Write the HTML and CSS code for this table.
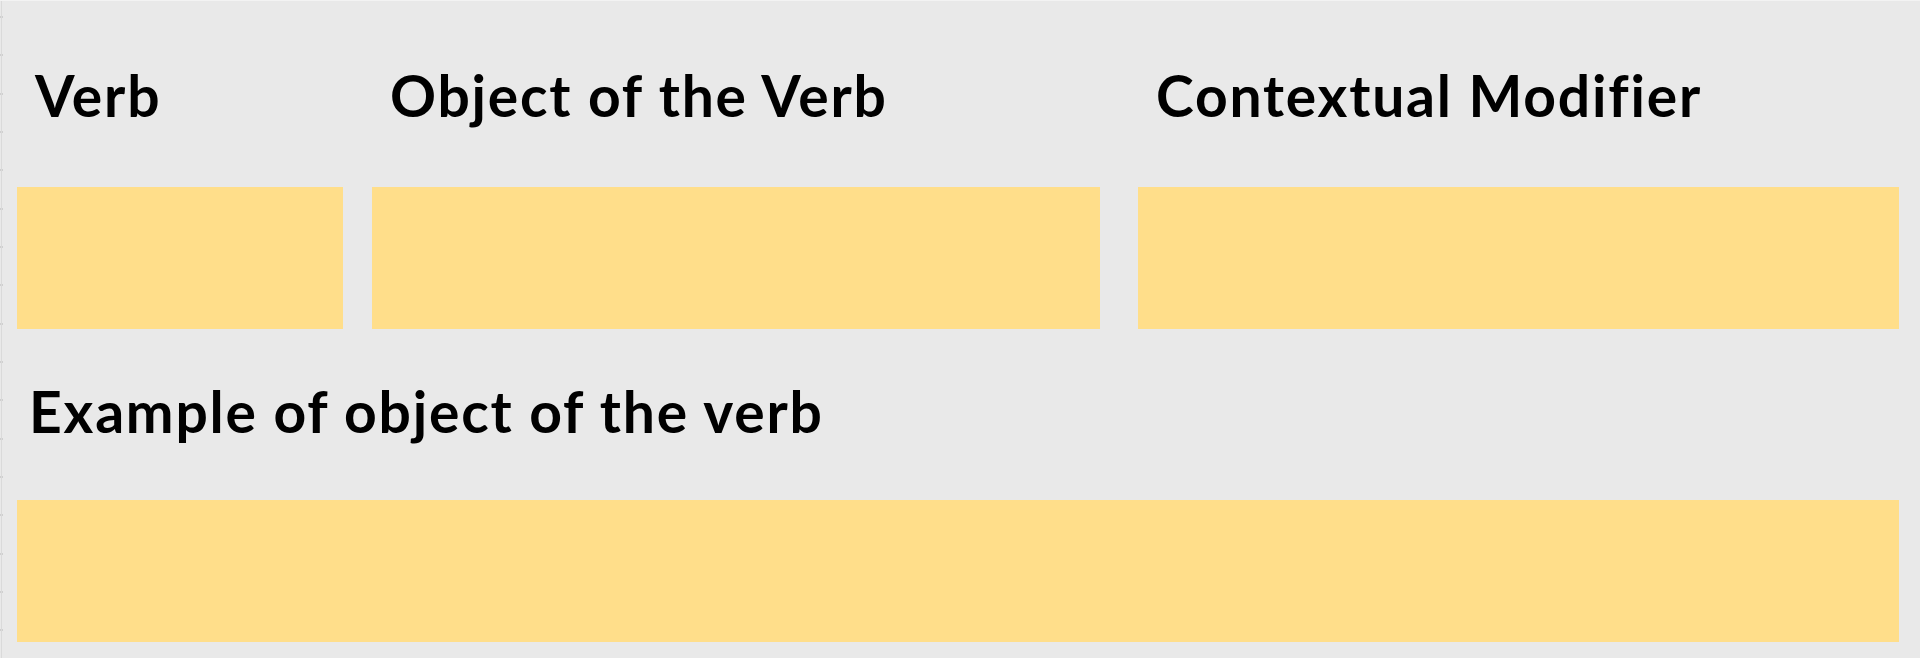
FILE: index.html
```html
<!DOCTYPE html>
<html lang="en">
<head>
<meta charset="utf-8">
<title>Verb template</title>
<link rel="stylesheet" href="styles.css">
</head>
<body>
<main class="page">
  <section class="row-three">
    <h2 class="label">Verb</h2>
    <h2 class="label">Object of the Verb</h2>
    <h2 class="label label-wide">Contextual Modifier</h2>
    <div class="slot"></div>
    <div class="slot"></div>
    <div class="slot slot-wide"></div>
  </section>
  <section class="row-one">
    <h2 class="label label-example">Example of object of the verb</h2>
    <div class="slot slot-full"></div>
  </section>
</main>
</body>
</html>
```
FILE: styles.css
```css
html, body {
  margin: 0;
  padding: 0;
  background: #e9e9e9;
}

body {
  font-family: "Lato", "Liberation Sans", sans-serif;
  color: #000;
}

.page {
  box-sizing: border-box;
  width: 1920px;
  height: 658px;
  padding: 0 21px 0 17px;
  background:
    linear-gradient(#f3f3f3, #f3f3f3) 0 0 / 100% 1px no-repeat,
    linear-gradient(#dadada, #dadada) 1px 0 / 1px 100% no-repeat,
    repeating-linear-gradient(to bottom, transparent 0 16px, #cfcfcf 16px 18px, transparent 18px 38.33px) 0 0 / 3px 100% no-repeat,
    #e9e9e9;
}

.row-three {
  display: grid;
  grid-template-columns: 326px 29px 728px 38px 761px;
  grid-template-rows: 57px 142px;
  row-gap: 63px;
  padding-top: 67px;
}

.row-three > :nth-child(1),
.row-three > :nth-child(4) { grid-column: 1; }
.row-three > :nth-child(2),
.row-three > :nth-child(5) { grid-column: 3; }
.row-three > :nth-child(3),
.row-three > :nth-child(6) { grid-column: 5; }
.row-three > :nth-child(-n+3) { grid-row: 1; }
.row-three > :nth-child(n+4) { grid-row: 2; }

.label {
  margin: 0;
  padding-left: 18px;
  font-size: 57px;
  line-height: 57px;
  font-weight: 700;
  letter-spacing: 1.8px;
  white-space: nowrap;
}

.slot {
  background: #ffde8a;
}

.row-one {
  display: flex;
  flex-direction: column;
  gap: 60px;
  padding-top: 54px;
}

.label-example {
  padding-left: 12px;
}

.slot-full {
  height: 142px;
}
```
